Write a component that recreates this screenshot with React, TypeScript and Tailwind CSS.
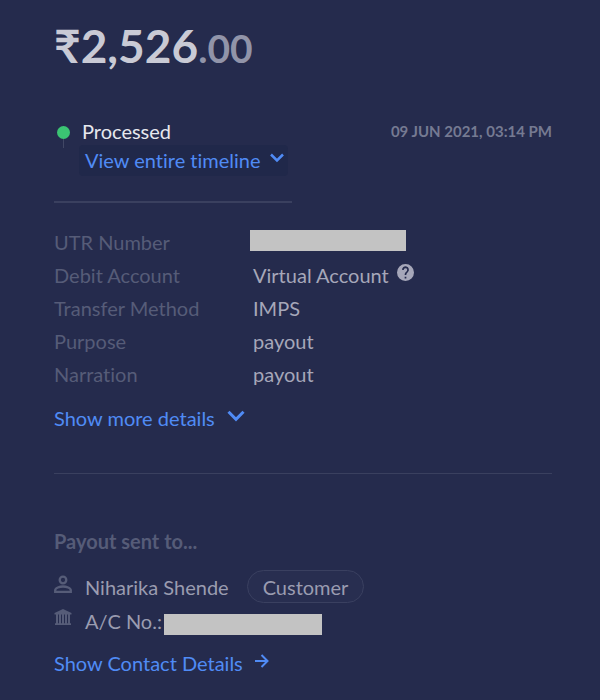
import type { ReactNode } from "react";

const GREY_BOX = "bg-[#c3c3c3]";

function Chevron() {
  return (
    <svg viewBox="0 0 18 12" className="mb-1 h-3 w-[18px]" fill="none" stroke="currentColor" strokeWidth="3" aria-hidden="true">
      <path d="M1.500 1.800 9 9.300l7.500-7.500" />
    </svg>
  );
}

function SmallChevron() {
  return (
    <svg viewBox="0 0 14 10" className="mb-1 h-[10px] w-[14px]" fill="none" stroke="currentColor" strokeWidth="2.500" aria-hidden="true">
      <path d="M1 1.500l6 6 6-6" />
    </svg>
  );
}

function HelpIcon() {
  return (
    <svg viewBox="2 2 20 20" className="mb-1 h-[17px] w-[17px]" fill="currentColor" aria-hidden="true">
      <path d="M12 2a10 10 0 1 0 0 20 10 10 0 0 0 0-20zm1 17h-2v-2h2v2zm2.070-7.750-.9.920C13.450 12.900 13 13.500 13 15h-2v-.5c0-1.100.450-2.100 1.170-2.830l1.240-1.260A2 2 0 1 0 10 9H8a4 4 0 1 1 7.070 2.250z" />
    </svg>
  );
}

function PersonIcon() {
  return (
    <svg viewBox="0 0 18 18" className="mb-1.5 h-[18px] w-[18px]" fill="none" stroke="currentColor" strokeWidth="2.300" aria-hidden="true">
      <circle cx="9" cy="5" r="3.300" />
      <path d="M1.200 16.800v-1.500c0-2.300 4.500-3.800 7.800-3.800s7.800 1.500 7.800 3.800v1.500z" />
    </svg>
  );
}

function BankIcon() {
  return (
    <svg viewBox="0 0 18 16" className="mb-2 h-4 w-[18px]" fill="currentColor" aria-hidden="true">
      <path d="M9 0 .5 4v1.500h17V4zM2 5.500h2v9H2zM5 5.500h2v9H5zM8 5.500h2v9H8zM11 5.500h2v9h-2zM14 5.500h2v9h-2zM1 14.300h16V16H1z" />
    </svg>
  );
}

function ArrowIcon() {
  return (
    <svg viewBox="0 0 14 14" className="mb-1 h-[14px] w-[14px]" fill="none" stroke="currentColor" strokeWidth="2" aria-hidden="true">
      <path d="M0 7h12.500M6.500 1l6 6-6 6" />
    </svg>
  );
}

function Detail({ label, children }: { label: string; children: ReactNode }) {
  return (
    <div className="flex h-[33px] items-center">
      <dt className="w-[199px] shrink-0 text-[#565c78]">{label}</dt>
      <dd className="flex items-center gap-2 text-[#a6a7b9]">{children}</dd>
    </div>
  );
}

export default function App() {
  return (
    <main className="min-h-screen bg-[#252b4d] pt-5 pr-12 pb-5 pl-[54px] font-[Lato,sans-serif] text-[20px] leading-7 [font-variant-ligatures:none]">
      <h1 className="text-[46px] leading-[52px] font-bold text-[#c9cad5]">
        ₹2,526<span className="text-[39px] text-[#9194a9]">.00</span>
      </h1>

      <section className="mt-[43px] flex items-start">
        <div className="mt-[9px] ml-[3px] flex w-[13px] flex-col items-center">
          <span className="h-[13px] w-[13px] rounded-full bg-[#3bc473]" />
          <span className="h-[9px] w-px bg-[#414765]" />
        </div>
        <div className="ml-[9px]">
          <p className="pl-[3px] text-[#e7e8ee]">Processed</p>
          <button type="button" className="flex h-[31px] w-[209px] items-center justify-between rounded-sm bg-[#20284a] pr-1 pb-0.5 pl-1.5 text-[#508bf5]">
            View entire timeline
            <SmallChevron />
          </button>
        </div>
        <time className="ml-auto text-[15px] font-bold text-[#757a92]">09 JUN 2021, 03:14 PM</time>
      </section>

      <hr className="mt-[25px] w-[238px] border-t-2 border-[#3a405f]" />

      <dl className="mt-[22px]">
        <Detail label="UTR Number">
          <span className={`-ml-[3px] mb-0.5 h-[21px] w-[156px] ${GREY_BOX}`} />
        </Detail>
        <Detail label="Debit Account">
          Virtual Account
          <button type="button" aria-label="About virtual accounts">
            <HelpIcon />
          </button>
        </Detail>
        <Detail label="Transfer Method">IMPS</Detail>
        <Detail label="Purpose">payout</Detail>
        <Detail label="Narration">payout</Detail>
      </dl>

      <button type="button" className="mt-3.5 flex items-center gap-3 text-[#508bf5]">
        Show more details
        <Chevron />
      </button>

      <hr className="mt-[41px] border-[#3a405f]" />

      <section className="mt-[53px]">
        <h2 className="font-bold text-[#565c78]">Payout sent to...</h2>
        <div className="mt-[15px] flex h-[33px] items-center text-[#9a9cb0]">
          <span className="mr-[13px] text-[#565c78]">
            <PersonIcon />
          </span>
          Niharika Shende
          <span className="ml-[18px] flex h-[33px] items-center rounded-full border border-[#3a4060] bg-[#282e50] px-[15px]">Customer</span>
        </div>
        <div className="mt-px flex h-[33px] items-center text-[#9a9cb0]">
          <span className="mr-[13px] text-[#565c78]">
            <BankIcon />
          </span>
          A/C No.:
          <span className={`mt-2 ml-0.5 h-[21px] w-[158px] ${GREY_BOX}`} />
        </div>
        <a href="#contact" className="mt-3 flex w-fit items-center gap-3 text-[#508bf5]">
          Show Contact Details
          <ArrowIcon />
        </a>
      </section>
    </main>
  );
}
